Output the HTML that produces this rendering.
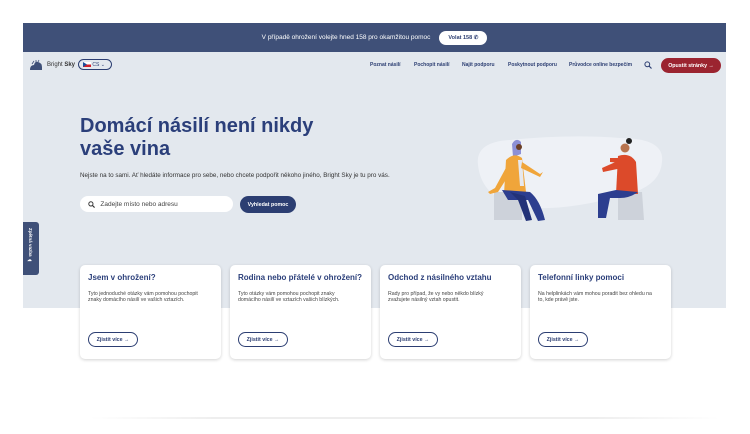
<!DOCTYPE html>
<html><head><meta charset="utf-8"><style>
*{margin:0;padding:0;box-sizing:border-box}
body{width:750px;height:434px;background:#fff;font-family:"Liberation Sans",sans-serif;position:relative;overflow:hidden;color:#222}
.top{position:absolute;left:23px;top:23px;width:703px;height:29px;background:#3f5078;color:#fff;font-size:6.5px;display:flex;align-items:center;justify-content:center}
.top .call{margin-left:9px;background:#fff;color:#2c3e72;border-radius:8px;padding:4px 9px;font-weight:bold;font-size:5.5px}
.hero{position:absolute;left:23px;top:52px;width:703px;height:256px;background:#e3e8ee}
.nav{position:absolute;left:0;top:52px;width:750px;height:26px}
.logo{position:absolute;left:29px;top:7px;display:flex;align-items:center;font-size:6px;color:#333}
.lang{position:absolute;left:78px;top:7px;width:34px;height:11px;border:1px solid #2c3e72;border-radius:6px;font-size:5px;display:flex;align-items:center;padding-left:4px;color:#2c3e72}
.links span{position:absolute;top:10px;font-size:5px;font-weight:bold;color:#2c3e72;white-space:nowrap}
.exit{position:absolute;left:661px;top:6px;width:60px;height:15px;background:#9b2430;border-radius:8px;color:#fff;font-size:5.3px;display:flex;align-items:center;justify-content:center;font-weight:bold}
h1{position:absolute;left:80px;top:115px;font-size:20px;line-height:23px;color:#2b3f7a;font-weight:bold}
.sub{position:absolute;left:80px;top:172px;font-size:6.3px;color:#333}
.search{position:absolute;left:80px;top:196px;width:153px;height:16px;background:#fff;border-radius:8px;font-size:6.5px;color:#444;display:flex;align-items:center;padding-left:8px}
.btn{position:absolute;left:240px;top:196px;width:56px;height:17px;background:#2c3e72;border-radius:9px;color:#fff;font-size:5.3px;font-weight:bold;display:flex;align-items:center;justify-content:center}
.fb{position:absolute;left:23px;top:222px;width:16px;height:53px;background:#3f5078;border-radius:0 3px 3px 0}
.fb span{position:absolute;left:5px;top:6px;writing-mode:vertical-rl;color:#fff;font-size:4.5px;font-weight:bold}
.card{position:absolute;top:265px;width:141px;height:94px;background:#fff;border-radius:5px;box-shadow:0 1px 3px rgba(0,0,0,.18)}
.card h3{position:absolute;left:8px;top:8px;font-size:8px;color:#2b3f7a;white-space:nowrap}
.card p{position:absolute;left:8px;top:26px;width:118px;font-size:5.2px;line-height:6.3px;color:#444}
.card .more{position:absolute;left:8px;top:67px;width:50px;height:15px;border:1px solid #2c3e72;border-radius:8px;font-size:5.3px;font-weight:bold;color:#2c3e72;display:flex;align-items:center;justify-content:center}
.line{position:absolute;left:90px;top:417px;width:630px;height:2px;background:linear-gradient(90deg,#fff,#eee 20%,#eee 80%,#fff)}
</style></head><body>
<div class="top">V případě ohrožení volejte hned 158 pro okamžitou pomoc <span class="call">Volat 158 &#9990;</span></div>
<div class="hero"></div>
<div class="nav">
<div class="logo"><svg width="14" height="12" viewBox="0 0 14 12"><path d="M1 11 Q1 6 5 6 Q6 2 9 3 Q13 4 13 8 L13 11Z" fill="#3f5078"/><path d="M3 5 L5 2 M7 1 L7 3 M10 1 L9 3" stroke="#3f5078" stroke-width="0.8"/></svg><span style="margin-left:4px">Bright <b>Sky</b></span></div>
<div class="lang"><svg width="8" height="5"><rect width="8" height="2.5" fill="#fff"/><rect y="2.5" width="8" height="2.5" fill="#d0202a"/><path d="M0 0 L4 2.5 L0 5Z" fill="#1b4e9b"/></svg>&nbsp;CS ⌄</div>
<div class="links"><span style="left:370px">Poznat násilí</span><span style="left:414px">Pochopit násilí</span><span style="left:462px">Najít podporu</span><span style="left:508px">Poskytnout podporu</span><span style="left:569px">Průvodce online bezpečím</span></div>
<svg style="position:absolute;left:644px;top:9px" width="8" height="8" viewBox="0 0 8 8"><circle cx="3.3" cy="3.3" r="2.4" fill="none" stroke="#2c3e72" stroke-width="1"/><path d="M5 5 L7.5 7.5" stroke="#2c3e72" stroke-width="1.2"/></svg>
<div class="exit">Opustit stránky →</div>
</div>
<h1>Domácí násilí není nikdy<br>vaše vina</h1>
<div class="sub">Nejste na to sami. Ať hledáte informace pro sebe, nebo chcete podpořit někoho jiného, Bright Sky je tu pro vás.</div>
<div class="search"><svg width="7" height="7" viewBox="0 0 8 8"><circle cx="3.3" cy="3.3" r="2.4" fill="none" stroke="#333" stroke-width="1.1"/><path d="M5 5 L7.5 7.5" stroke="#333" stroke-width="1.3"/></svg>&nbsp;&nbsp;&nbsp;Zadejte místo nebo adresu</div>
<div class="btn">Vyhledat pomoc</div>
<svg style="position:absolute;left:470px;top:130px" width="220" height="95" viewBox="0 0 220 95">
<path d="M8 35 Q5 12 40 10 Q100 4 150 8 Q195 8 192 32 Q190 58 150 66 Q100 80 60 78 Q12 72 8 35Z" fill="#eef1f6"/>
<path d="M24 62 L52 62 L52 90 L24 90Z" fill="#cdd2da"/>
<path d="M148 62 L172 62 L174 90 L148 90Z" fill="#cdd2da"/>
<path d="M42 14 Q46 7 51 12 L51 24 L43 27Z" fill="#8c90d6"/>
<circle cx="49" cy="17" r="3" fill="#6b3f26"/>
<path d="M36 30 Q44 22 52 28 L56 62 L34 64Z" fill="#f0a53a"/>
<path d="M48 30 L52 30 L54 56 L50 56Z" fill="#e6e8ee"/>
<path d="M38 34 L25 58 L18 62 L20 64 L28 62 L42 40Z" fill="#f0a53a"/>
<path d="M52 32 L70 44 L73 42 L70 47 L51 38Z" fill="#f0a53a"/>
<path d="M32 60 L60 62 Q70 70 75 90 L68 91 L58 70 L38 70Z" fill="#2c3e8f"/>
<path d="M40 62 L55 66 L62 90 L56 91 L48 70Z" fill="#223278"/>
<circle cx="155" cy="18" r="4.5" fill="#b8744f"/>
<circle cx="159" cy="11" r="3" fill="#222"/>
<path d="M148 26 Q160 22 166 32 L168 64 L146 64Z" fill="#dc4a2a"/>
<path d="M150 30 L132 38 L133 42 L152 38Z" fill="#dc4a2a"/>
<path d="M152 28 L140 28 L140 32 L152 33Z" fill="#dc4a2a"/>
<path d="M146 60 L168 62 Q160 68 150 68 L140 68 L136 88 L128 88 L128 64Z" fill="#2c3e8f"/>
</svg>
<div class="fb"><span>Zpětná vazba ☁</span></div>
<div class="card" style="left:80px"><h3>Jsem v ohrožení?</h3><p>Tyto jednoduché otázky vám pomohou pochopit znaky domácího násilí ve vašich vztazích.</p><div class="more">Zjistit více →</div></div>
<div class="card" style="left:230px"><h3>Rodina nebo přátelé v ohrožení?</h3><p>Tyto otázky vám pomohou pochopit znaky domácího násilí ve vztazích vašich blízkých.</p><div class="more">Zjistit více →</div></div>
<div class="card" style="left:380px"><h3>Odchod z násilného vztahu</h3><p>Rady pro případ, že vy nebo někdo blízký zvažujete násilný vztah opustit.</p><div class="more">Zjistit více →</div></div>
<div class="card" style="left:530px"><h3>Telefonní linky pomoci</h3><p>Na helplinkách vám mohou poradit bez ohledu na to, kde právě jste.</p><div class="more">Zjistit více →</div></div>
<div class="line"></div>
</body></html>
